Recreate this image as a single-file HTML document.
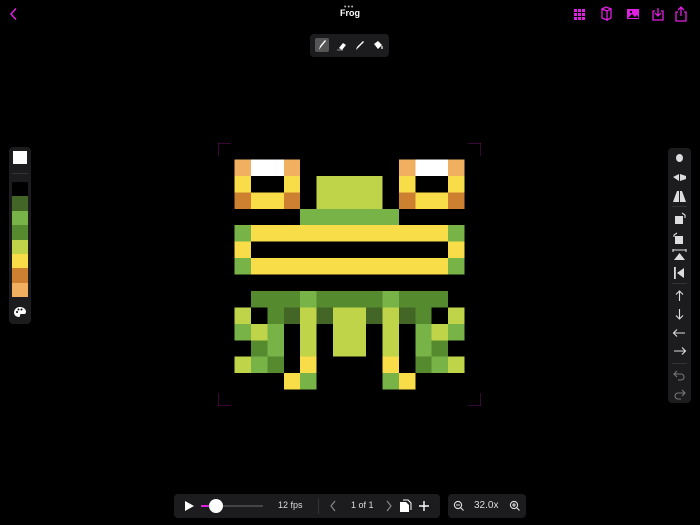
<!DOCTYPE html>
<html><head><meta charset="utf-8"><style>
body{margin:0;width:700px;height:525px;background:#000;overflow:hidden;position:relative;font-family:"Liberation Sans",sans-serif;color:#fff}
.abs{position:absolute}
.panel{position:absolute;background:#1c1c1e;border-radius:4px}
</style></head><body>
<svg class="abs" style="left:8px;top:7px" width="12" height="14" viewBox="0 0 12 14"><path d="M8 1.5L3 7l5 5.5" stroke="#e020e0" stroke-width="1.5" fill="none"/></svg>
<div class="abs" style="left:344px;top:4px;font-size:7px;color:#bbb;letter-spacing:1px">•••</div>
<div class="abs" style="left:0;width:700px;top:8px;text-align:center;font-size:9px;font-weight:bold">Frog</div>
<svg class="abs" style="left:573px;top:6px" width="120" height="16" viewBox="0 0 120 16">
<g fill="#e020e0">
<rect x="1" y="3" width="3" height="3"/><rect x="5" y="3" width="3" height="3"/><rect x="9" y="3" width="3" height="3"/>
<rect x="1" y="7" width="3" height="3"/><rect x="5" y="7" width="3" height="3"/><rect x="9" y="7" width="3" height="3"/>
<rect x="1" y="11" width="3" height="3"/><rect x="5" y="11" width="3" height="3"/><rect x="9" y="11" width="3" height="3"/>
</g>
<path d="M29 3l5 2v9l-5-2zM34 5l4-2v9l-4 2zM29 3l4-2 5 2" stroke="#e020e0" stroke-width="1.3" fill="none"/>
<rect x="54" y="3" width="12" height="10" fill="#e020e0"/><path d="M55 12l4-4 3 3 2-2 2 3z" fill="#000"/><circle cx="58" cy="6" r="1.2" fill="#000"/>
<path d="M82 5h-2v9h10V5h-2M85 2v8M82 7l3 3 3-3" stroke="#e020e0" stroke-width="1.3" fill="none"/>
<path d="M105 6h-2v9h10V6h-2M108 10V1M105 4l3-3 3 3" stroke="#e020e0" stroke-width="1.3" fill="none"/>
</svg>
<div class="panel" style="left:310px;top:34px;width:79px;height:23px"></div>
<div class="abs" style="left:315px;top:38px;width:14px;height:14px;background:#555;border-radius:2px"></div>
<svg class="abs" style="left:315px;top:38px" width="72" height="14" viewBox="0 0 72 14">
<path d="M4 12l1-4 5-6 1 1-5 6z" fill="#fff"/>
<path d="M24 10l4-5 3 2-4 5z" fill="#fff"/><path d="M22 12h6" stroke="#aaa" stroke-width="0.8"/>
<path d="M41 12l1-3 6-6 1 1-6 6z" fill="#fff"/>
<path d="M59 6l4-3 4 4-4 4z" fill="#fff"/><path d="M67 8v3" stroke="#fff" stroke-width="1.2"/>
</svg>
<div class="panel" style="left:9px;top:147px;width:22px;height:177px"></div>
<div class="abs" style="left:13px;top:151px;width:14px;height:13px;background:#fff"></div>
<div class="abs" style="left:12px;top:173px;width:16px;height:1px;background:#333"></div>
<div class="abs" style="left:12px;top:182px;width:16px">
<div style="height:14.4px;background:#000"></div><div style="height:14.4px;background:#436626"></div><div style="height:14.4px;background:#77b347"></div><div style="height:14.4px;background:#568a2f"></div><div style="height:14.4px;background:#bfd449"></div><div style="height:14.4px;background:#f8dc48"></div><div style="height:14.4px;background:#cc8030"></div><div style="height:14.4px;background:#f0b060"></div>
</div>
<svg class="abs" style="left:13px;top:306px" width="14" height="12" viewBox="0 0 14 12"><path d="M7 1C3 1 1 4 1 6.5S3 11 6 11c1 0 1-1 1-2s1-1 2-1h2c1.5 0 2-1 2-2.5C13 3 10 1 7 1z" fill="#fff"/><circle cx="4" cy="6" r="1" fill="#000"/><circle cx="5.5" cy="3.5" r="1" fill="#000"/><circle cx="8.5" cy="3.5" r="1" fill="#000"/></svg>
<div class="panel" style="left:668px;top:148px;width:23px;height:255px"></div>
<svg class="abs" style="left:668px;top:148px" width="23" height="255" viewBox="0 0 23 255">
<g fill="#ddd">
<ellipse cx="11.5" cy="10" rx="3.5" ry="4"/>
<path d="M5 29l6-3v7zM12 26l6 2v3l-6 2z"/>
<path d="M5 54l4-11h2v11zM12 43h2l4 11h-6z"/>
<rect x="7" y="68" width="8" height="8"/><rect x="7" y="88" width="8" height="8"/>
<path d="M6 112l5.5-7 5.5 7zM16 120l-7 5 7 5zM6 119h1.8v12H6z"/>
</g>
<g stroke="#ddd" stroke-width="1.1" fill="none">
<path d="M14 65l3 2v3M9 85l-3 2v2"/>
<path d="M5 102h13M5 101v3M18 101v3"/>
<path d="M11.5 153v-10M8 146.5l3.5-3.5 3.5 3.5"/>
<path d="M11.5 161v10M8 167.5l3.5 3.5 3.5-3.5"/>
<path d="M17 185H6M9 181.5l-3.5 3.5 3.5 3.5"/>
<path d="M6 203h11M14 199.5l3.5 3.5-3.5 3.5"/>
</g>
<g stroke="#777" stroke-width="1.1" fill="none">
<path d="M9 223l-3 3 3 3M6 226h7a3 3 0 0 1 0 6h-3"/>
<path d="M14 242l3 3-3 3M17 245h-7a3 3 0 0 0 0 6h3"/>
</g>
<g fill="#333"><rect x="4" y="58" width="15" height="1"/><rect x="4" y="135" width="15" height="1"/><rect x="4" y="215" width="15" height="1"/></g>
</svg>
<svg class="abs" style="left:218px;top:143px" width="263" height="263" viewBox="0 0 16 16" shape-rendering="crispEdges">
<g id="p"></g>
<path d="M0 0.8V0h0.8M15.2 0H16v0.8M0 15.2V16h0.8M15.2 16H16v-0.8" stroke="#6a106a" stroke-width="0.08" fill="none"/>
</svg>
<script>
var rows=[
"................",
".OWWO......OWWO.",
".Y..Y.LLLL.Y..Y.",
".DYYD.LLLL.DYYD.",
".....GGGGGG.....",
".GYYYYYYYYYYYYG.",
".Y............Y.",
".GYYYYYYYYYYYYG.",
"................",
"..MMMGMMMMGMMM..",
".L.MKLKLLKLKM.L.",
".GLG.L.LL.L.GLG.",
"..MG.L.LL.L.GM..",
".LGM.Y....Y.MGL.",
"....YG....GY....",
"................"];
var c={O:"#f0b060",W:"#fff",Y:"#f8dc48",L:"#bfd449",D:"#cc8030",G:"#77b347",M:"#568a2f",K:"#436626"};
var s="";for(var y=0;y<16;y++)for(var x=0;x<16;x++){var k=rows[y][x];if(c[k])s+='<rect x="'+x+'" y="'+y+'" width="1" height="1" fill="'+c[k]+'"/>';}
document.getElementById("p").innerHTML=s;
</script>
<div class="panel" style="left:174px;top:494px;width:266px;height:24px"></div>
<svg class="abs" style="left:184px;top:500px" width="12" height="12"><path d="M1 1l9 5-9 5z" fill="#fff"/></svg>
<div class="abs" style="left:201px;top:505px;width:62px;height:2px;background:#444"></div>
<div class="abs" style="left:201px;top:505px;width:14px;height:2px;background:#e020e0"></div>
<div class="abs" style="left:209px;top:499px;width:14px;height:14px;border-radius:50%;background:#fff"></div>
<div class="abs" style="left:278px;top:500px;font-size:9px;color:#ddd">12 fps</div>
<div class="abs" style="left:318px;top:498px;width:1px;height:16px;background:#333"></div>
<svg class="abs" style="left:328px;top:500px" width="70" height="12"><path d="M7 1L3 6l4 5M59 1l4 5-4 5" stroke="#888" stroke-width="1.2" fill="none"/></svg>
<div class="abs" style="left:351px;top:500px;font-size:9px;color:#ddd">1 of 1</div>
<svg class="abs" style="left:399px;top:499px" width="34" height="14"><path d="M1 3h6l3 3v7H1z" fill="#fff"/><path d="M4 1h5l3 3v7" stroke="#fff" fill="none"/><path d="M25 2v10M20 7h10" stroke="#fff" stroke-width="1.4"/></svg>
<div class="panel" style="left:448px;top:494px;width:78px;height:24px"></div>
<svg class="abs" style="left:453px;top:500px" width="70" height="12"><g stroke="#ddd" stroke-width="1.1" fill="none"><circle cx="5" cy="5" r="3.6"/><path d="M7.5 7.5l3 3M3 5h4"/><circle cx="61" cy="5" r="3.6"/><path d="M63.5 7.5l3 3M59 5h4M61 3v4"/></g></svg>
<div class="abs" style="left:474px;top:500px;font-size:10px;color:#ddd">32.0x</div>
</body></html>
